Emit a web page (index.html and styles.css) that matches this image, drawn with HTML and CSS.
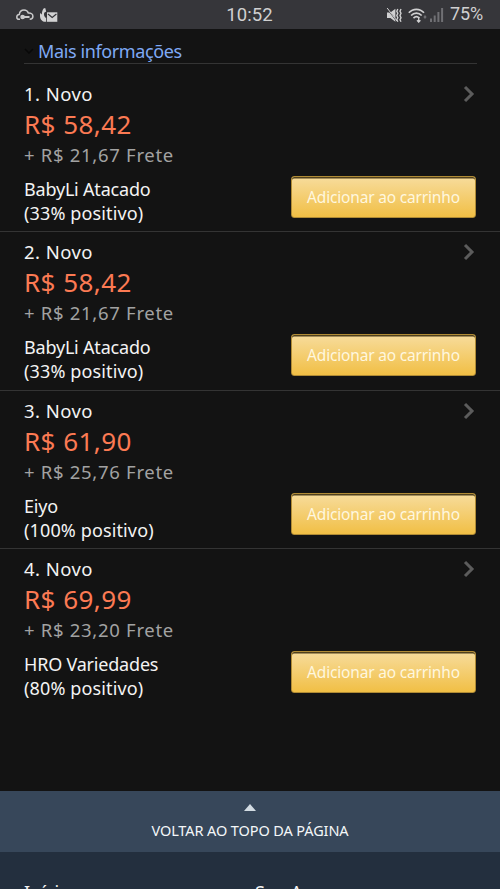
FILE: index.html
```html
<!DOCTYPE html>
<html lang="pt-BR">
<head>
<meta charset="utf-8">
<title>Ofertas</title>
<link rel="stylesheet" href="styles.css">
</head>
<body>
<header class="status">
  <div class="status-left">
    <svg class="cloud" width="18" height="12" viewBox="0 0 18 12" fill="none" stroke="#c9c9ca" stroke-width="1.5"><path d="M4 10.3H3C1.4 10.3.8 9.1.8 7.9c0-1.4 1-2.4 2.5-2.5C3.7 2.6 5.4 1 8 1c2.1 0 3.7 1.1 4.3 3 2.8-.2 4.6 1.1 4.6 3.3 0 1.9-1.3 3-3.2 3"/><circle cx="6.6" cy="8" r="1.6" fill="#c9c9ca"/><path d="M8 8h5.5" stroke-width="2"/></svg>
    <svg width="18" height="15" viewBox="0 0 18 15"><path d="M3.6.6 5.2 0l1 3.4-2 1.4c-.5 2 0 3.6 1.2 4.9l.8-.3v4.4C2.4 14.4 0 11 0 7.9V5l1.8 1.6C1.9 4.2 2.4 2.2 3.6.6Z" fill="#d3d3d4"/><path d="M7 4.3h10.3v9.5H7z" fill="#d3d3d4"/><path d="m8 6 4.2 3.5L16.4 6" fill="none" stroke="#36363a" stroke-width="1.2"/></svg>
  </div>
  <span class="clock">10:52</span>
  <div class="status-right">
    <svg width="15" height="15" viewBox="0 0 15 15" fill="none" stroke="#d0d0d1"><path d="M0 4.5h3.4L8.4.8v13L3.4 10H0z" fill="#d0d0d1" stroke="none"/><path d="m.2.6 9.6 12.5" stroke="#36363a" stroke-width="1.1"/><path d="m.2 0 9.8 13" stroke-width="1"/><path d="m10.8 1-1 2.2 1 2.1-1 2.2 1 2.2-1 2.1 1 2M14 1l-1 2.2 1 2.1-1 2.2 1 2.2-1 2.1 1 2" stroke-width="1.4"/></svg>
    <svg width="19" height="15" viewBox="0 0 19 15" fill="none" stroke="#d0d0d1" stroke-width="1.7"><path d="M.8 4.8c4.2-4.7 11-4.7 15.2 0M3.1 7.5c3-3.2 7.6-3.2 10.6 0M5.5 10.1c1.8-1.7 4-1.7 5.8 0"/><path d="M10.7 9v5M9 12.3l1.7 1.8 1.7-1.8" stroke-width="1.3"/><path d="m15.4 9 1.6-2 1.6 2-1.6 2z" fill="#707074" stroke="none"/></svg>
    <svg class="signal" width="14" height="14" viewBox="0 0 14 14"><path d="M0 10.5h2V14H0zM3.7 7.5h2V14h-2zM7.4 4h2v10h-2zM11.1 0h2v14h-2z" fill="#707074"/></svg>
    <span class="battery">75%</span>
  </div>
</header>
<main>
  <div class="more"><svg width="10" height="6" viewBox="0 0 10 6"><path d="m1 1 4 4 4-4" fill="none" stroke="#080808" stroke-width="1.5"/></svg><a>Mais informações</a></div>
  <section class="offer">
    <div class="info"><div class="cond">1. Novo</div><div class="price">R$ 58,42</div><div class="ship">+ R$ 21,67 Frete</div><div class="seller"><div class="name">BabyLi Atacado</div><div class="rating">(33% positivo)</div></div></div>
    <div class="side"><svg class="chev" width="12" height="18" viewBox="0 0 12 18"><path d="m2 2 7 7-7 7"/></svg><button>Adicionar ao carrinho</button></div>
  </section>
  <section class="offer">
    <div class="info"><div class="cond">2. Novo</div><div class="price">R$ 58,42</div><div class="ship">+ R$ 21,67 Frete</div><div class="seller"><div class="name">BabyLi Atacado</div><div class="rating">(33% positivo)</div></div></div>
    <div class="side"><svg class="chev" width="12" height="18" viewBox="0 0 12 18"><path d="m2 2 7 7-7 7"/></svg><button>Adicionar ao carrinho</button></div>
  </section>
  <section class="offer">
    <div class="info"><div class="cond">3. Novo</div><div class="price">R$ 61,90</div><div class="ship">+ R$ 25,76 Frete</div><div class="seller"><div class="name">Eiyo</div><div class="rating">(100% positivo)</div></div></div>
    <div class="side"><svg class="chev" width="12" height="18" viewBox="0 0 12 18"><path d="m2 2 7 7-7 7"/></svg><button>Adicionar ao carrinho</button></div>
  </section>
  <section class="offer">
    <div class="info"><div class="cond">4. Novo</div><div class="price">R$ 69,99</div><div class="ship">+ R$ 23,20 Frete</div><div class="seller"><div class="name">HRO Variedades</div><div class="rating">(80% positivo)</div></div></div>
    <div class="side"><svg class="chev" width="12" height="18" viewBox="0 0 12 18"><path d="m2 2 7 7-7 7"/></svg><button>Adicionar ao carrinho</button></div>
  </section>
</main>
<a class="top"><svg width="12" height="7" viewBox="0 0 12 7"><path d="M6 0 12 7H0z" fill="#d3dce3"/></svg><span>VOLTAR AO TOPO DA PÁGINA</span></a>
<footer><span>Início</span><span>Seu Amazon</span></footer>
</body>
</html>
```
FILE: styles.css
```css
* { box-sizing: border-box; }
html, body { height: 889px; overflow: hidden; }
body { margin: 0; background: #131313; color: #f3f3f3; font-family: "Noto Sans", sans-serif; font-size: 18px; display: flex; flex-direction: column; }
.status { height: 29px; flex: none; background: #36363a; display: grid; grid-template-columns: 1fr auto 1fr; align-items: center; padding: 1px 17px 0 16px; font-family: Roboto, sans-serif; color: #d0d0d1; }
.status-left { display: flex; align-items: center; gap: 6px; }
.clock { font-size: 18.5px; letter-spacing: .1px; }
.status-right { display: flex; align-items: center; justify-content: flex-end; gap: 6px; }
.signal { margin-left: -3px; }
.battery { font-size: 18px; line-height: 20px; margin-top: -2px; letter-spacing: -.1px; }
main { height: 762px; flex: none; }
.more { height: 35px; margin: 0 23px 0 24px; border-bottom: 1px solid #343434; display: flex; align-items: center; padding-top: 9px; gap: 4px; color: #7fa9f5; font-size: 18px; letter-spacing: -.38px; }
.offer { height: 158.35px; padding: 8px 24px 0; border-bottom: 1px solid #343434; display: flex; justify-content: space-between; white-space: nowrap; }
.more + .offer { height: 168.35px; padding-top: 18px; }
.offer:last-child { border-bottom: 0; }
.cond { line-height: 24px; font-size: 18.5px; letter-spacing: .45px; }
.price { font-size: 26px; line-height: 36px; letter-spacing: .45px; color: #fc7a53; }
.ship { line-height: 26px; font-size: 18.5px; letter-spacing: .7px; color: #a2a2a2; }
.seller { margin-top: 9px; line-height: 24px; }
.name { letter-spacing: -.2px; }
.rating { letter-spacing: .13px; }
.side { display: flex; flex-direction: column; align-items: flex-end; }
.chev { margin: 3px 1px 0 0; fill: none; stroke: #5c5c5c; stroke-width: 3; }
button { margin-top: 73px; width: 185px; height: 42px; border: 1px solid #b08b35; border-radius: 3px; background: linear-gradient(#f7dc9c, #f1bf45); box-shadow: inset 0 1.5px 0 #50401c; color: #fff7df; font: 15.5px "Noto Sans", sans-serif; letter-spacing: -.18px; padding: 0; }
.top { height: 61px; flex: none; background: #37475a; display: flex; flex-direction: column; align-items: center; padding-top: 13px; color: #f4f7f9; font-size: 14.5px; letter-spacing: -.1px; }
.top span { line-height: 20px; margin-top: 9px; }
footer { flex: 1; background: #232f3e; display: grid; grid-template-columns: 231px 1fr; padding: 28px 24px 0; line-height: 24px; overflow: hidden; }
```
